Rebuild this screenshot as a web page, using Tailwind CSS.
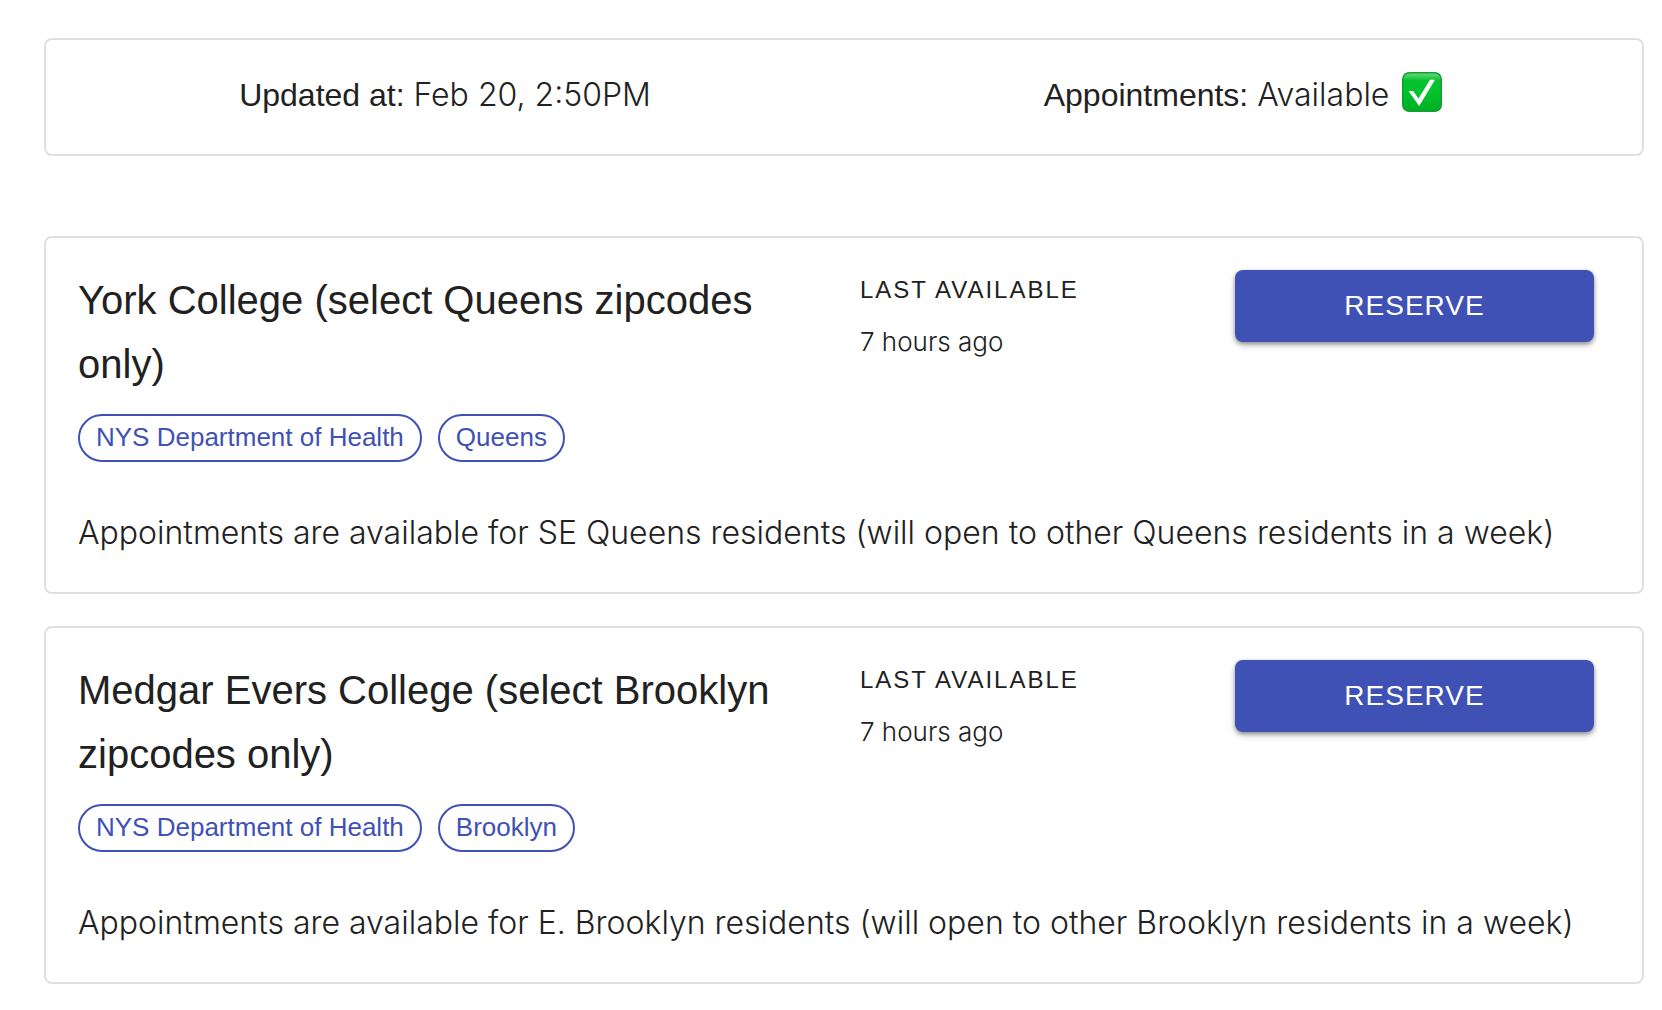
<!DOCTYPE html>
<html lang="en">
<head>
  <meta charset="UTF-8" />
  <meta name="viewport" content="width=device-width, initial-scale=1.0" />
  <title>Vaccine Appointments</title>
  <script src="https://cdn.jsdelivr.net/npm/@tailwindcss/browser@4"></script>
</head>
<body class="bg-white text-[#212121] font-['Liberation_Sans',Arial,sans-serif]">
  <main class="pl-11 pr-[18px] pt-[38px] pb-6">

    <!-- status bar -->
    <section class="grid grid-cols-2 border-2 border-[#e0e0e0] rounded-lg pt-[31px] pb-[35px] text-center text-[32px] leading-[48px]">
      <p><strong class="font-normal">Updated at:</strong> <span class="font-['Inter',sans-serif] font-light">Feb 20, 2:50PM</span></p>
      <p>
        <strong class="font-normal">Appointments:</strong> <span class="font-['Inter',sans-serif] font-light">Available</span>
        <svg class="inline-block size-10 ml-1 align-[-6px]" viewBox="0 0 40 40" role="img" aria-label="Yes">
          <defs>
            <linearGradient id="green" x1="0" y1="0" x2="0" y2="1">
              <stop offset="0" stop-color="#6fd980" />
              <stop offset="0.2" stop-color="#06c22f" />
              <stop offset="0.5" stop-color="#00c42b" />
              <stop offset="1" stop-color="#00ad24" />
            </linearGradient>
          </defs>
          <rect x="0.75" y="0.75" width="38.5" height="38.5" rx="6.5" fill="url(#green)" stroke="#159c33" stroke-width="1.5" />
          <path d="M6.5 19h4.7l5.3 7.6L28 7.8h5L17.2 34Z" fill="#fff" />
        </svg>
      </p>
    </section>

    <!-- locations -->
    <div class="mt-20 space-y-8">
      <article class="border-2 border-[#e0e0e0] rounded-lg pl-8 pr-12 pt-[30px] pb-[35px]">
        <div class="grid grid-cols-[782fr_375fr_359fr] items-start">
          <div class="pr-8">
            <h2 class="text-[40px] leading-[64px]">York College (select Queens zipcodes only)</h2>
            <div class="flex gap-4 mt-[18px] text-[26px] leading-[42px] text-[#3f51b5]">
              <span class="border-2 border-[#3f51b5] rounded-full px-4 pb-0.5">NYS Department of Health</span>
              <span class="border-2 border-[#3f51b5] rounded-full px-4 pb-0.5">Queens</span>
            </div>
          </div>
          <div>
            <h3 class="text-[24px] leading-[44px] tracking-[2px] uppercase">Last available</h3>
            <p class="mt-2 font-['Inter',sans-serif] font-light text-[26px] leading-[44px]">7 hours ago</p>
          </div>
          <button type="button" class="mt-0.5 h-18 rounded-lg bg-[#3f51b5] text-white text-[28px] tracking-[1px] uppercase shadow-[0_2px_4px_rgba(0,0,0,0.4),0_4px_8px_rgba(0,0,0,0.12)] cursor-pointer hover:bg-[#303f9f]">Reserve</button>
        </div>
        <p class="mt-[47px] font-['Inter',sans-serif] font-light text-[32px] leading-[48px]">Appointments are available for SE Queens residents (will open to other Queens residents in a week)</p>
      </article>

      <article class="border-2 border-[#e0e0e0] rounded-lg pl-8 pr-12 pt-[30px] pb-[35px]">
        <div class="grid grid-cols-[782fr_375fr_359fr] items-start">
          <div class="pr-8">
            <h2 class="text-[40px] leading-[64px]">Medgar Evers College (select Brooklyn zipcodes only)</h2>
            <div class="flex gap-4 mt-[18px] text-[26px] leading-[42px] text-[#3f51b5]">
              <span class="border-2 border-[#3f51b5] rounded-full px-4 pb-0.5">NYS Department of Health</span>
              <span class="border-2 border-[#3f51b5] rounded-full px-4 pb-0.5">Brooklyn</span>
            </div>
          </div>
          <div>
            <h3 class="text-[24px] leading-[44px] tracking-[2px] uppercase">Last available</h3>
            <p class="mt-2 font-['Inter',sans-serif] font-light text-[26px] leading-[44px]">7 hours ago</p>
          </div>
          <button type="button" class="mt-0.5 h-18 rounded-lg bg-[#3f51b5] text-white text-[28px] tracking-[1px] uppercase shadow-[0_2px_4px_rgba(0,0,0,0.4),0_4px_8px_rgba(0,0,0,0.12)] cursor-pointer hover:bg-[#303f9f]">Reserve</button>
        </div>
        <p class="mt-[47px] font-['Inter',sans-serif] font-light text-[32px] leading-[48px]">Appointments are available for E. Brooklyn residents (will open to other Brooklyn residents in a week)</p>
      </article>
    </div>
  </main>
</body>
</html>
